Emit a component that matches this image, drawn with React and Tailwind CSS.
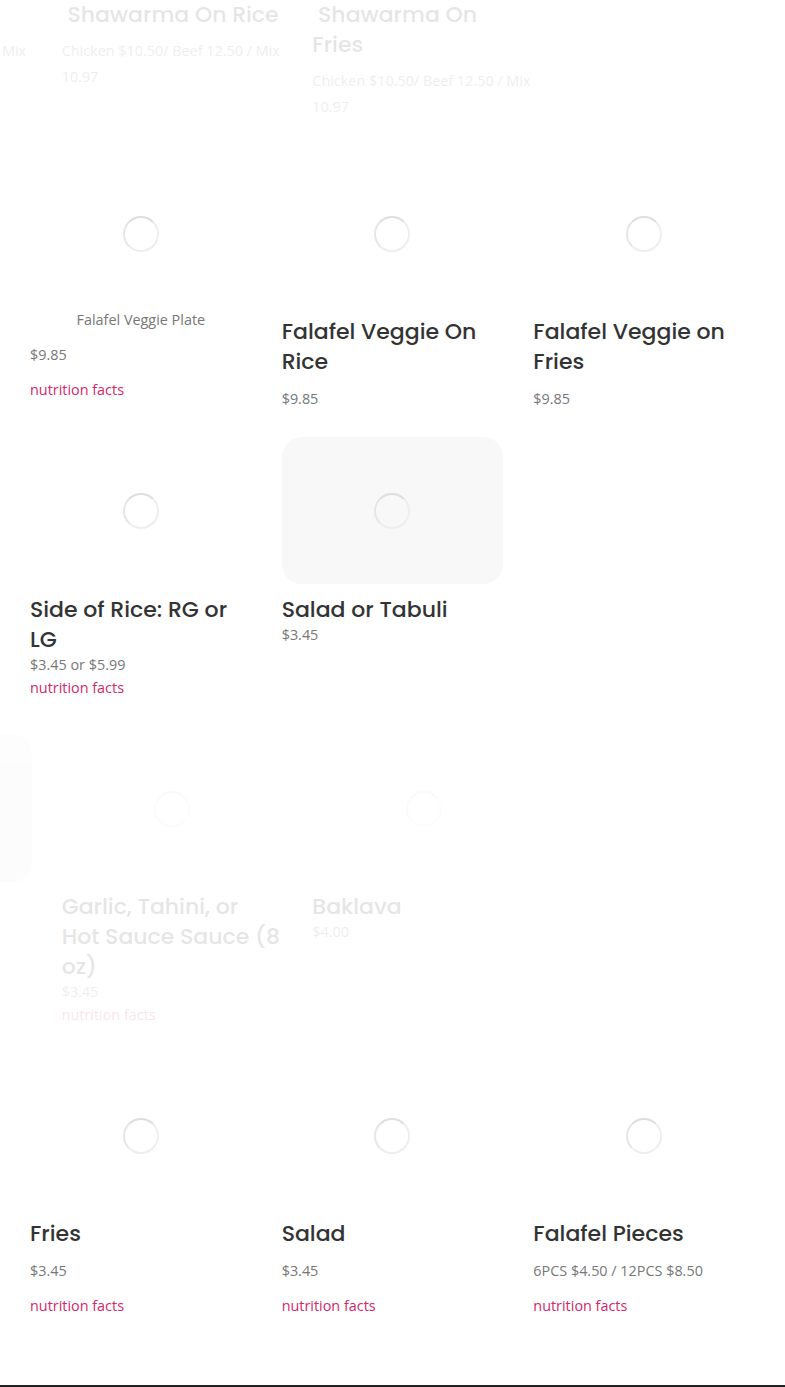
import React from 'react';

const heading = "font-['Poppins','Inter',sans-serif] text-[22px] leading-[30px] font-medium text-[#333]";
const body = "font-['Open_Sans',sans-serif] text-[14.4px] text-[#777]";
const link = "font-['Open_Sans',sans-serif] text-[14.4px] text-[#d1286a]";

function Spinner() {
  return (
    <div className="h-9 w-9 rounded-full border-2 border-[#eeeeee] border-t-[#dedede] border-l-[#e6e6e6]" />
  );
}

function Photo({ bg = '' }) {
  return (
    <div className={`flex h-[147px] items-center justify-center rounded-[20px] ${bg}`}>
      <Spinner />
    </div>
  );
}

function Row({ children, className = '' }) {
  return (
    <div className={`grid grid-cols-3 items-start gap-x-[30px] px-[30px] ${className}`}>
      {children}
    </div>
  );
}

export default function App() {
  return (
    <div className="min-h-[1387px] w-full overflow-hidden bg-white">
      {/* first row, still sliding in */}
      <Row className="-translate-x-[222px] opacity-[0.12]">
        <div>
          <h3 className={heading}>Shawarma Plate</h3>
          <p className={`${body} mt-[8px] leading-[26px]`}>Chicken $10.50/ Beef 12.50 / Mix 10.97</p>
        </div>
        <div className="ml-[2px]">
          <h3 className={heading}>{'\u00a0'}Shawarma On Rice</h3>
          <p className={`${body} mt-[8px] leading-[26px]`}>Chicken $10.50/ Beef 12.50 / Mix 10.97</p>
        </div>
        <div className="ml-px">
          <h3 className={heading}>{'\u00a0'}Shawarma On<br />Fries</h3>
          <p className={`${body} mt-[8px] leading-[26px]`}>Chicken $10.50/ Beef 12.50 / Mix 10.97</p>
        </div>
      </Row>

      <Row className="mt-[40px]">
        <div>
          <Photo />
          <p className={`${body} text-center leading-[26px]`}>Falafel Veggie Plate</p>
          <p className={`${body} mt-[9px] leading-[26px]`}>$9.85</p>
          <a className={`${link} mt-[9px] block leading-[26px]`}>nutrition facts</a>
        </div>
        <div>
          <Photo />
          <h3 className={`${heading} mt-[10px]`}>Falafel Veggie On Rice</h3>
          <p className={`${body} mt-[9px] leading-[26px]`}>$9.85</p>
        </div>
        <div>
          <Photo />
          <h3 className={`${heading} mt-[10px]`}>Falafel Veggie on Fries</h3>
          <p className={`${body} mt-[9px] leading-[26px]`}>$9.85</p>
        </div>
      </Row>

      <Row className="mt-[25px]">
        <div>
          <Photo />
          <h3 className={`${heading} mt-[11px]`}>Side of Rice: RG or LG</h3>
          <p className={`${body} leading-[20px]`}>$3.45 or $5.99</p>
          <a className={`${link} mt-[3px] block leading-[20px]`}>nutrition facts</a>
        </div>
        <div>
          <Photo bg="bg-[#f8f8f8]" />
          <h3 className={`${heading} mt-[11px]`}>Salad or Tabuli</h3>
          <p className={`${body} leading-[20px]`}>$3.45</p>
        </div>
        <div />
      </Row>

      {/* fourth row, still sliding in */}
      <Row className="mt-[37px] -translate-x-[220px] opacity-[0.12]">
        <div>
          <div className="h-[147px] rounded-[20px] bg-[#ebebeb]" />
        </div>
        <div>
          <Photo />
          <h3 className={`${heading} mt-[10px]`}>Garlic, Tahini, or<br />Hot Sauce Sauce (8<br />oz)</h3>
          <p className={`${body} leading-[20px]`}>$3.45</p>
          <a className={`${link} mt-[3px] block leading-[20px]`}>nutrition facts</a>
        </div>
        <div className="-ml-px">
          <Photo />
          <h3 className={`${heading} mt-[10px]`}>Baklava</h3>
          <p className={`${body} leading-[20px]`}>$4.00</p>
        </div>
      </Row>

      <Row className="mt-[37px]">
        <div>
          <Photo />
          <h3 className={`${heading} mt-[10px]`}>Fries</h3>
          <p className={`${body} mt-[9px] leading-[26px]`}>$3.45</p>
          <a className={`${link} mt-[9px] block leading-[26px]`}>nutrition facts</a>
        </div>
        <div>
          <Photo />
          <h3 className={`${heading} mt-[10px]`}>Salad</h3>
          <p className={`${body} mt-[9px] leading-[26px]`}>$3.45</p>
          <a className={`${link} mt-[9px] block leading-[26px]`}>nutrition facts</a>
        </div>
        <div>
          <Photo />
          <h3 className={`${heading} mt-[10px]`}>Falafel Pieces</h3>
          <p className={`${body} mt-[9px] leading-[26px]`}>6PCS $4.50 / 12PCS $8.50</p>
          <a className={`${link} mt-[9px] block leading-[26px]`}>nutrition facts</a>
        </div>
      </Row>

      <div className="mt-[66px] h-[40px] border-t-2 border-[#222]" />
    </div>
  );
}
